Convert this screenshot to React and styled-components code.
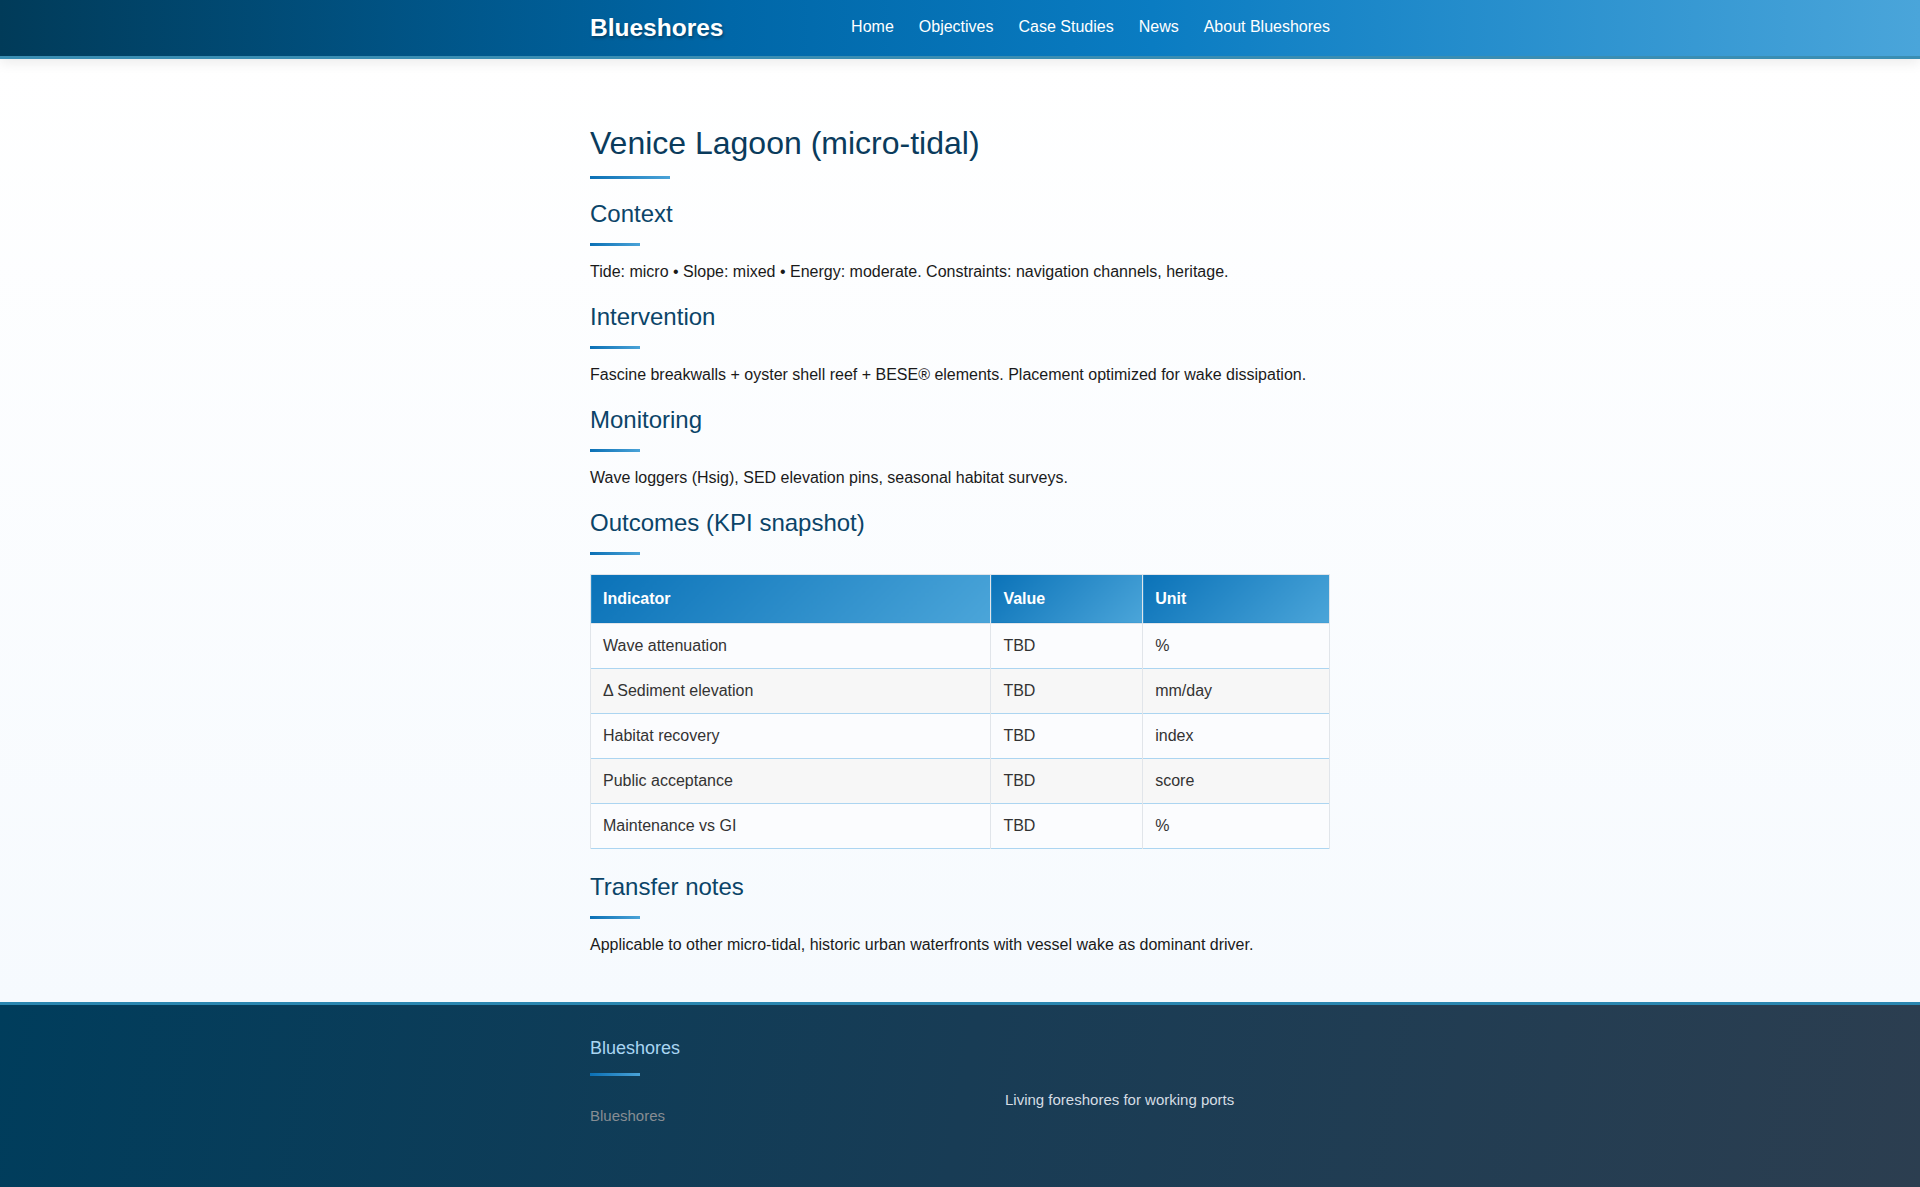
import React from 'react';
import styled, { createGlobalStyle } from 'styled-components';

const GlobalStyle = createGlobalStyle`
  * { box-sizing: border-box; }
  body {
    margin: 0;
    font-family: "Liberation Sans", Arial, sans-serif;
    background: #f7fbfe;
    color: #1a1a1a;
  }
`;

const Header = styled.header`
  height: 59px;
  background: linear-gradient(90deg, #013b59 0%, #0067a8 38%, #0a7cc2 60%, #4aa5da 100%);
  border-bottom: 3px solid #3a8eb3;
  box-shadow: 0 4px 12px rgba(0, 0, 0, 0.08);
  position: relative;
  z-index: 2;
`;

const Wrap = styled.div`
  width: 740px;
  margin: 0 auto;
`;

const HeaderInner = styled(Wrap)`
  height: 56px;
  display: flex;
  align-items: center;
  justify-content: space-between;
`;

const Logo = styled.div`
  color: #fff;
  font-size: 24.5px;
  font-weight: 700;
  text-shadow: 1px 2px 3px rgba(0, 0, 0, 0.35);
`;

const Nav = styled.nav`
  display: flex;
  gap: 25px;
  padding-bottom: 3px;
`;

const NavLink = styled.a`
  color: #fff;
  font-size: 16px;
  text-decoration: none;
`;

const Main = styled.main`
  background: linear-gradient(180deg, #ffffff 0%, #f6fafe 100%);
  padding: 65px 0 26px;
`;

const Bar = styled.span`
  display: block;
  width: ${({ wide }) => (wide ? '80px' : '50px')};
  height: 3px;
  margin-top: 14px;
  background: linear-gradient(90deg, #0b70b5, #4aa3d8);
`;

const Title = styled.h1`
  margin: 0 0 21px;
  font-size: 32px;
  line-height: 1.2;
  font-weight: 400;
  color: #0a3b5c;
`;

const Heading = styled.h2`
  margin: 0 0 13px;
  font-size: 24px;
  line-height: 1.2;
  font-weight: 400;
  color: #0b4468;
`;

const Text = styled.p`
  margin: 0 0 18.5px;
  font-size: 16px;
  line-height: 1.6;
  color: #1a1a1a;
`;

const Table = styled.table`
  width: 740px;
  margin: 19px 0 24px;
  border-collapse: collapse;
  font-size: 16px;
`;

const Th = styled.th`
  width: ${({ w }) => w};
  padding: 14px 12px;
  line-height: 20px;
  text-align: left;
  color: #fff;
  font-weight: 700;
  border: 1px solid #e1e5ea;
  background: linear-gradient(135deg, #0a72b8 0%, #4ba5d9 100%);
`;

const Tr = styled.tr`
  background: ${({ alt }) => (alt ? '#f7f7f7' : '#fbfcfe')};
  border-bottom: 1px solid #acd5f1;
`;

const Td = styled.td`
  padding: 12px 12px;
  line-height: 20px;
  color: #333;
  border-left: 1px solid #e1e5ea;
  border-right: 1px solid #e1e5ea;
`;

const Footer = styled.footer`
  background: linear-gradient(100deg, #003d5c 0%, #183c55 50%, #2c3e50 100%);
  border-top: 3px solid #2a86b0;
  padding: 33px 0 90px;
`;

const FooterGrid = styled(Wrap)`
  display: grid;
  grid-template-columns: 415px 1fr;
`;

const FooterTitle = styled.h3`
  margin: 0;
  font-size: 18px;
  line-height: 1.2;
  font-weight: 400;
  color: #a9d6f2;
`;

const FooterText = styled.p`
  margin: ${({ top }) => top};
  font-size: 15px;
  line-height: 1.6;
  color: ${({ muted }) => (muted ? '#878d93' : '#d5dde4')};
`;

const rows = [
  ['Wave attenuation', 'TBD', '%'],
  ['Δ Sediment elevation', 'TBD', 'mm/day'],
  ['Habitat recovery', 'TBD', 'index'],
  ['Public acceptance', 'TBD', 'score'],
  ['Maintenance vs GI', 'TBD', '%'],
];

const sections = [
  ['Context', 'Tide: micro • Slope: mixed • Energy: moderate. Constraints: navigation channels, heritage.'],
  ['Intervention', 'Fascine breakwalls + oyster shell reef + BESE® elements. Placement optimized for wake dissipation.'],
  ['Monitoring', 'Wave loggers (Hsig), SED elevation pins, seasonal habitat surveys.'],
];

export default function App() {
  return (
    <>
      <GlobalStyle />
      <Header>
        <HeaderInner>
          <Logo>Blueshores</Logo>
          <Nav>
            <NavLink href="#">Home</NavLink>
            <NavLink href="#">Objectives</NavLink>
            <NavLink href="#">Case Studies</NavLink>
            <NavLink href="#">News</NavLink>
            <NavLink href="#">About Blueshores</NavLink>
          </Nav>
        </HeaderInner>
      </Header>
      <Main>
        <Wrap>
          <Title>
            Venice Lagoon (micro-tidal)
            <Bar wide />
          </Title>
          {sections.map(([h, t]) => (
            <React.Fragment key={h}>
              <Heading>
                {h}
                <Bar />
              </Heading>
              <Text>{t}</Text>
            </React.Fragment>
          ))}
          <Heading>
            Outcomes (KPI snapshot)
            <Bar />
          </Heading>
          <Table>
            <thead>
              <tr>
                <Th w="401px">Indicator</Th>
                <Th w="152px">Value</Th>
                <Th w="187px">Unit</Th>
              </tr>
            </thead>
            <tbody>
              {rows.map((r, i) => (
                <Tr key={r[0]} alt={i % 2 === 1}>
                  <Td>{r[0]}</Td>
                  <Td>{r[1]}</Td>
                  <Td>{r[2]}</Td>
                </Tr>
              ))}
            </tbody>
          </Table>
          <Heading>
            Transfer notes
            <Bar />
          </Heading>
          <Text>Applicable to other micro-tidal, historic urban waterfronts with vessel wake as dominant driver.</Text>
        </Wrap>
      </Main>
      <Footer>
        <FooterGrid>
          <div>
            <FooterTitle>
              Blueshores
              <Bar />
            </FooterTitle>
            <FooterText muted top="28px 0 0">Blueshores</FooterText>
          </div>
          <div>
            <FooterText top="50px 0 0">Living foreshores for working ports</FooterText>
          </div>
        </FooterGrid>
      </Footer>
    </>
  );
}
